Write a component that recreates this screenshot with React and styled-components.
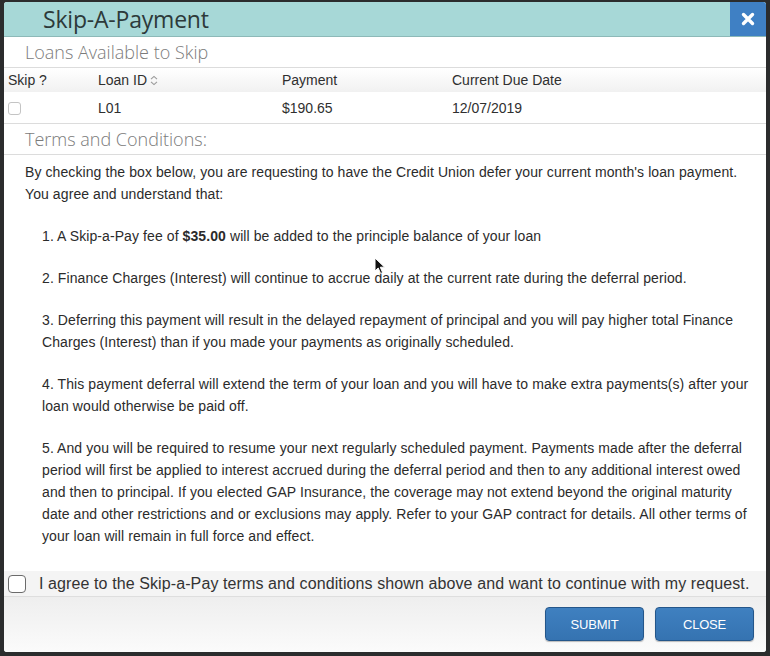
import React from "react";
import styled, { createGlobalStyle } from "styled-components";

const GlobalStyle = createGlobalStyle`
  html, body {
    margin: 0;
    padding: 0;
    background: #2b2c2d;
  }
  body {
    font-family: "Liberation Sans", Arial, sans-serif;
    color: #333;
  }
`;

const Page = styled.div`
  width: 770px;
  height: 656px;
  padding: 2px 4px 4px 4px;
  box-sizing: border-box;
  position: relative;
`;

const Modal = styled.div`
  width: 762px;
  height: 650px;
  background: #fff;
  border-radius: 3px;
  overflow: hidden;
  display: flex;
  flex-direction: column;
`;

const Header = styled.div`
  height: 34px;
  background: #a7d8d7;
  border-bottom: 1px solid #8db9b8;
  display: flex;
  align-items: center;
  justify-content: space-between;
  flex-shrink: 0;
`;

const Title = styled.h1`
  margin: 0 0 0 39px;
  font-family: "Open Sans", sans-serif;
  font-weight: 400;
  font-size: 23px;
  color: #2d3a3a;
  letter-spacing: -0.2px;
`;

const CloseX = styled.button`
  width: 36px;
  height: 34px;
  border: none;
  background: #3f80c4;
  color: #fff;
  display: flex;
  align-items: center;
  justify-content: center;
  padding: 0;
  cursor: pointer;
`;

const SectionTitle = styled.div`
  height: 30px;
  padding-left: 21px;
  display: flex;
  align-items: center;
  font-family: "Open Sans", sans-serif;
  font-weight: 300;
  font-size: 18px;
  color: #7b7b7b;
  border-bottom: 1px solid #dcdcdc;
  flex-shrink: 0;
`;

const Table = styled.div`
  display: flex;
  flex-direction: column;
  border-bottom: 1px solid #dcdcdc;
  flex-shrink: 0;
`;

const Row = styled.div`
  display: grid;
  grid-template-columns: 90px 184px 170px 1fr;
  align-items: center;
  padding-left: 4px;
  height: ${(p) => (p.$head ? "24px" : "31px")};
  background: ${(p) =>
    p.$head ? "linear-gradient(#ffffff, #f1f1f1)" : "#fff"};
  font-size: 14px;
  color: #2f2f2f;
`;

const Cell = styled.div`
  display: flex;
  align-items: center;
  gap: 3px;
`;

const SmallBox = styled.span`
  width: 11px;
  height: 11px;
  border: 1px solid #c4c4c4;
  border-radius: 3px;
  background: #fff;
  margin-top: 2px;
`;

const Terms = styled.div`
  flex: 1;
  padding: 6px 12px 0 21px;
  font-size: 14px;
  line-height: 22px;
  letter-spacing: 0.09px;
  color: #2b2b2b;

  p {
    margin: 0 0 20px 0;
  }
`;

const Item = styled.p`
  padding-left: 17px;
`;

const Agree = styled.label`
  height: 25px;
  background: #f4f4f4;
  border-bottom: 1px solid #dedede;
  display: flex;
  align-items: center;
  gap: 13px;
  padding-left: 4px;
  font-size: 16px;
  letter-spacing: 0.1px;
  color: #333;
  flex-shrink: 0;
`;

const BigBox = styled.span`
  width: 16px;
  height: 16px;
  border: 1px solid #6b6b6b;
  border-radius: 4px;
  background: #fff;
`;

const Footer = styled.div`
  height: 55px;
  background: linear-gradient(#eeeeee, #fbfbfb);
  display: flex;
  justify-content: flex-end;
  align-items: flex-start;
  gap: 11px;
  padding: 10px 12px 0 0;
  box-sizing: border-box;
  flex-shrink: 0;
`;

const Button = styled.button`
  width: 99px;
  height: 34px;
  border: 1px solid #24568a;
  border-radius: 4px;
  background: linear-gradient(#3f80c0, #3573b1);
  color: #fff;
  font-family: "Liberation Sans", Arial, sans-serif;
  font-size: 13px;
  letter-spacing: -0.2px;
  box-shadow: 0 1px 1px rgba(0, 0, 0, 0.25);
  cursor: pointer;
`;

const Cursor = styled.svg`
  position: absolute;
  left: 374px;
  top: 257px;
`;

function SortIcon() {
  return (
    <svg width="8" height="11" viewBox="0 0 8 11">
      <path d="M1 4.2 L4 1.4 L7 4.2" fill="none" stroke="#9a9a9a" strokeWidth="1.1" />
      <path d="M1 6.8 L4 9.6 L7 6.8" fill="none" stroke="#9a9a9a" strokeWidth="1.1" />
    </svg>
  );
}

export default function App() {
  return (
    <>
      <GlobalStyle />
      <Page>
        <Modal>
          <Header>
            <Title>Skip-A-Payment</Title>
            <CloseX aria-label="close">
              <svg width="14" height="14" viewBox="0 0 14 14">
                <path d="M2.5 2.5 L11.5 11.5 M11.5 2.5 L2.5 11.5" stroke="#fff" strokeWidth="3.4" strokeLinecap="round" />
              </svg>
            </CloseX>
          </Header>
          <SectionTitle>Loans Available to Skip</SectionTitle>
          <Table>
            <Row $head>
              <Cell>Skip ?</Cell>
              <Cell>
                Loan ID <SortIcon />
              </Cell>
              <Cell>Payment</Cell>
              <Cell>Current Due Date</Cell>
            </Row>
            <Row>
              <Cell>
                <SmallBox />
              </Cell>
              <Cell>L01</Cell>
              <Cell>$190.65</Cell>
              <Cell>12/07/2019</Cell>
            </Row>
          </Table>
          <SectionTitle>Terms and Conditions:</SectionTitle>
          <Terms>
            <p>
              By checking the box below, you are requesting to have the Credit Union defer your current month's loan payment. You agree and understand that:
            </p>
            <Item>
              1. A Skip-a-Pay fee of <b>$35.00</b> will be added to the principle balance of your loan
            </Item>
            <Item>
              2. Finance Charges (Interest) will continue to accrue daily at the current rate during the deferral period.
            </Item>
            <Item>
              3. Deferring this payment will result in the delayed repayment of principal and you will pay higher total Finance Charges (Interest) than if you made your payments as originally scheduled.
            </Item>
            <Item>
              4. This payment deferral will extend the term of your loan and you will have to make extra payments(s) after your loan would otherwise be paid off.
            </Item>
            <Item>
              5. And you will be required to resume your next regularly scheduled payment. Payments made after the deferral period will first be applied to interest accrued during the deferral period and then to any additional interest owed and then to principal. If you elected GAP Insurance, the coverage may not extend beyond the original maturity date and other restrictions and or exclusions may apply. Refer to your GAP contract for details. All other terms of your loan will remain in full force and effect.
            </Item>
          </Terms>
          <Agree>
            <BigBox />
            I agree to the Skip-a-Pay terms and conditions shown above and want to continue with my request.
          </Agree>
          <Footer>
            <Button>SUBMIT</Button>
            <Button>CLOSE</Button>
          </Footer>
        </Modal>
        <Cursor width="12" height="18" viewBox="0 0 12 18">
          <path d="M1 1 L1 14 L4.2 11 L6.6 16.5 L8.6 15.6 L6.3 10.2 L10.6 10.2 Z" fill="#111" stroke="#fff" strokeWidth="1" />
        </Cursor>
      </Page>
    </>
  );
}
